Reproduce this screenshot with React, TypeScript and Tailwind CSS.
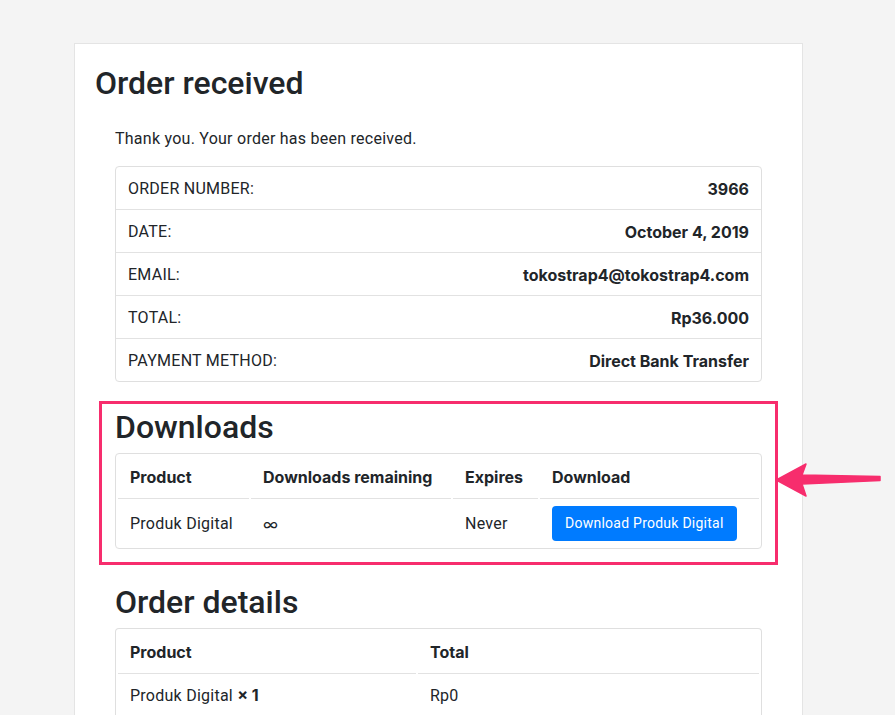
const orderInfo = [
  { label: "ORDER NUMBER:", value: "3966" },
  { label: "DATE:", value: "October 4, 2019" },
  { label: "EMAIL:", value: "tokostrap4@tokostrap4.com" },
  { label: "TOTAL:", value: "Rp36.000" },
  { label: "PAYMENT METHOD:", value: "Direct Bank Transfer" },
];

// bold text reads closer with Inter, regular with Roboto
const bold = "font-['Inter',sans-serif] font-bold tracking-normal";

function Arrow() {
  return (
    <svg
      width="106"
      height="36"
      viewBox="0 0 106 36"
      className="absolute left-[calc(100%+1px)] top-[58px]"
      aria-hidden
    >
      <path
        d="M0 18 L30 2 L26 13 L104 14.5 L104 18.5 L26 22 L30 34 Z"
        fill="#f72d6d"
        stroke="#f72d6d"
        strokeWidth="1.5"
        strokeLinejoin="round"
      />
    </svg>
  );
}

export default function App() {
  return (
    <div className="min-h-screen bg-[#f4f4f4] pt-[43px] font-['Roboto','Noto_Sans',sans-serif] tracking-[0.25px] text-[#212529]">
      <div className="ml-[74px] h-[690px] w-[729px] border border-[#e4e4e4] bg-white px-5 pt-5">
        <h1 className="text-[32px] leading-[38px] font-medium tracking-normal">Order received</h1>

        <div className="mx-5">
          <p className="mt-[25px] text-[16px] leading-6">Thank you. Your order has been received.</p>

          <ul className="mt-[15px] rounded border border-[#dfdfdf]">
            {orderInfo.map((row, i) => (
              <li
                key={row.label}
                className={`flex items-center justify-between px-3 pt-[10px] pb-[8px] text-[16px] leading-6 ${
                  i < orderInfo.length - 1 ? "border-b border-[#e2e2e2]" : ""
                }`}
              >
                <span>{row.label}</span>
                <span className={bold}>{row.value}</span>
              </li>
            ))}
          </ul>

          <section className="relative -mx-4 mt-[19px] border-[3px] border-[#f72d6d] px-[13px] pt-1 pb-[13px]">
            <h2 className="text-[32px] leading-[38px] font-medium tracking-normal">Downloads</h2>
            <div className="mt-[7px] rounded border border-[#dfdfdf]">
              <table className="w-full border-separate border-spacing-0.5 text-left text-[16px] leading-6">
                <thead>
                  <tr>
                    <th className={`w-[131px] border-b border-[#e2e2e2] px-3 py-[9px] ${bold}`}>Product</th>
                    <th className={`w-[200px] border-b border-[#e2e2e2] px-3 py-[9px] ${bold}`}>Downloads remaining</th>
                    <th className={`w-[85px] border-b border-[#e2e2e2] px-3 py-[9px] ${bold}`}>Expires</th>
                    <th className={`border-b border-[#e2e2e2] px-3 py-[9px] ${bold}`}>Download</th>
                  </tr>
                </thead>
                <tbody>
                  <tr>
                    <td className="px-3 py-[5px] align-middle">Produk Digital</td>
                    <td className="px-3 py-[5px] align-middle font-['Inter',sans-serif]">∞</td>
                    <td className="px-3 py-[5px] align-middle">Never</td>
                    <td className="px-3 py-[5px] align-middle">
                      <button
                        type="button"
                        className="rounded bg-[#007bff] px-[13px] py-[7px] text-[14px] leading-[21px] text-white"
                      >
                        Download Produk Digital
                      </button>
                    </td>
                  </tr>
                </tbody>
              </table>
            </div>
            <Arrow />
          </section>

          <h2 className="mt-[18px] text-[32px] leading-[38px] font-medium tracking-normal">Order details</h2>
          <div className="mt-[7px] rounded-t border border-b-0 border-[#dfdfdf]">
            <table className="w-full border-separate border-spacing-0.5 text-left text-[16px] leading-6">
              <thead>
                <tr>
                  <th className={`w-[298px] border-b border-[#e2e2e2] px-3 py-[9px] ${bold}`}>Product</th>
                  <th className={`border-b border-[#e2e2e2] px-3 py-[9px] ${bold}`}>Total</th>
                </tr>
              </thead>
              <tbody>
                <tr>
                  <td className="border-b border-[#e2e2e2] px-3 py-[7px]">
                    Produk Digital <strong className={bold}>× 1</strong>
                  </td>
                  <td className="border-b border-[#e2e2e2] px-3 py-[7px]">Rp0</td>
                </tr>
              </tbody>
            </table>
          </div>
        </div>
      </div>
    </div>
  );
}
